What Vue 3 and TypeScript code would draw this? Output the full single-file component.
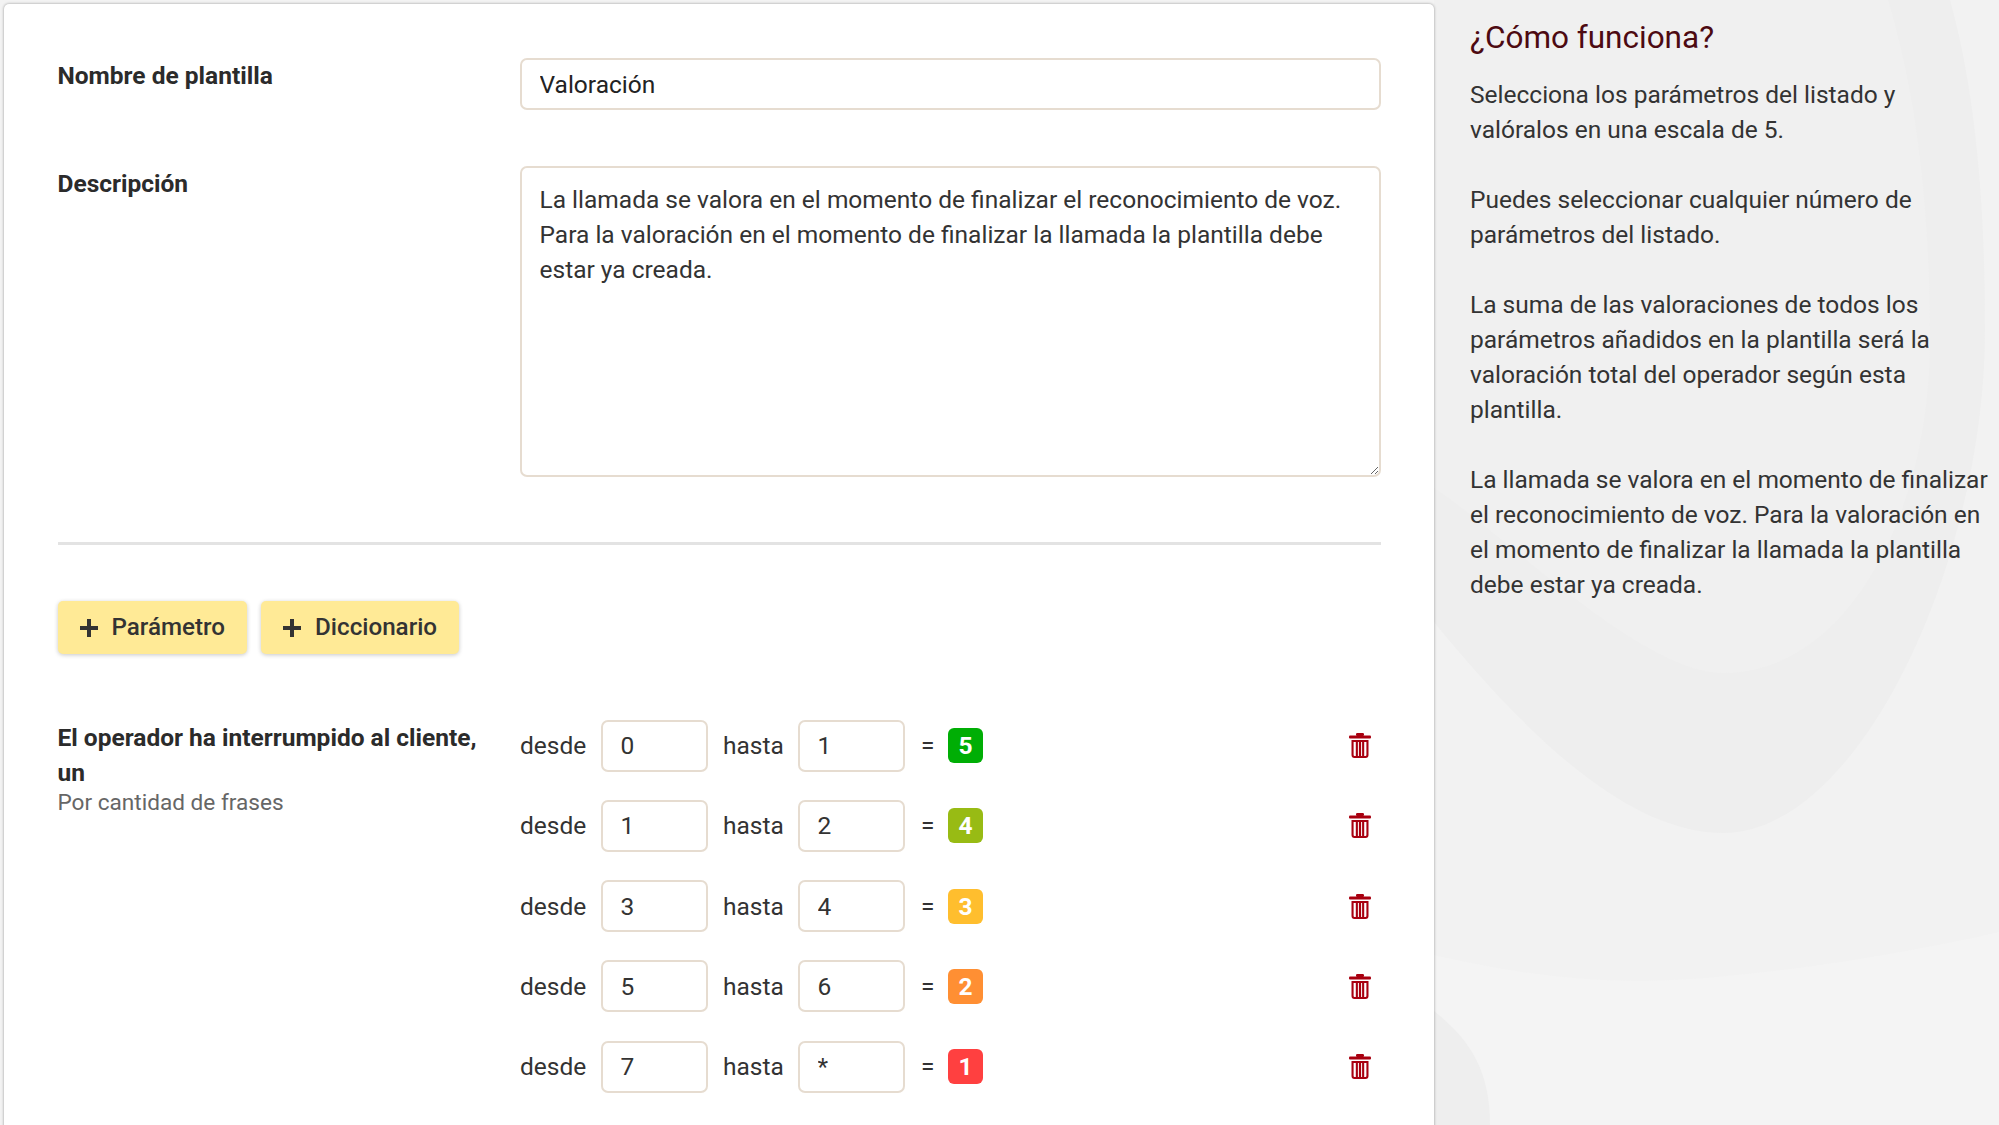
<script setup lang="ts">
interface Range { from: string; to: string; score: number; color: string }
const ranges: Range[] = [
  { from: '0', to: '1', score: 5, color: '#00ae05' },
  { from: '1', to: '2', score: 4, color: '#98bb14' },
  { from: '3', to: '4', score: 3, color: '#ffbe2e' },
  { from: '5', to: '6', score: 2, color: '#ff8f33' },
  { from: '7', to: '*', score: 1, color: '#ff4040' },
]
const description = 'La llamada se valora en el momento de finalizar el reconocimiento de voz. Para la valoración en el momento de finalizar la llamada la plantilla debe estar ya creada.'
const help = [
  'Selecciona los parámetros del listado y valóralos en una escala de 5.',
  'Puedes seleccionar cualquier número de parámetros del listado.',
  'La suma de las valoraciones de todos los parámetros añadidos en la plantilla será la valoración total del operador según esta plantilla.',
  'La llamada se valora en el momento de finalizar el reconocimiento de voz. Para la valoración en el momento de finalizar la llamada la plantilla debe estar ya creada.',
]
</script>

<template>
  <div class="page">
    <svg class="swirl" viewBox="0 0 1999 1125" preserveAspectRatio="none" aria-hidden="true">
      <rect x="1434" y="0" width="565" height="1125" fill="#f4f4f4" />
      <path d="M1434 0H1999V932C1840 968 1700 981 1640 981C1560 981 1490 968 1434 955Z" fill="#f2f2f2" />
      <path d="M1434 622C1530 740 1630 833 1723 833C1860 833 1985 560 1985 330C1985 200 1975 90 1950 0H1434Z" fill="#eeeeee" />
      <path d="M1434 488C1500 530 1640 673 1723 673C1850 673 1930 510 1930 340C1930 200 1915 90 1888 0H1434Z" fill="#f0f0f0" />
      <path d="M1434 1011C1470 1040 1490 1070 1490 1125H1434Z" fill="#eeeeee" />
    </svg>

    <main class="card">
      <div class="field">
        <label class="label">Nombre de plantilla</label>
        <input class="control name" type="text" value="Valoración" />
      </div>
      <div class="field field-desc">
        <label class="label">Descripción</label>
        <textarea class="control desc" :value="description"></textarea>
      </div>
      <hr class="divider" />
      <div class="actions">
        <button class="add" type="button">
          <svg class="plus" viewBox="0 0 18 18" aria-hidden="true"><path d="M7 0h4v7h7v4h-7v7H7v-7H0V7h7z" /></svg>
          Parámetro
        </button>
        <button class="add" type="button">
          <svg class="plus" viewBox="0 0 18 18" aria-hidden="true"><path d="M7 0h4v7h7v4h-7v7H7v-7H0V7h7z" /></svg>
          Diccionario
        </button>
      </div>
      <section class="param">
        <div class="param-head">
          <div class="param-title">El operador ha interrumpido al cliente, un</div>
          <div class="param-sub">Por cantidad de frases</div>
        </div>
        <div class="rows">
          <div v-for="r in ranges" :key="r.score" class="row">
            <span class="word">desde</span>
            <input class="control num" type="text" :value="r.from" />
            <span class="word">hasta</span>
            <input class="control num" type="text" :value="r.to" />
            <span class="eq">=</span>
            <span class="badge" :style="{ background: r.color }">{{ r.score }}</span>
            <svg class="trash" viewBox="0 0 22 25" aria-hidden="true">
              <rect x="7" y="0" width="8" height="3" rx="1.2" />
              <rect x="0" y="2.4" width="22" height="3" rx="1" />
              <path fill-rule="evenodd" d="M2.5 7h17v15a3 3 0 0 1-3 3h-11a3 3 0 0 1-3-3zM4.6 9v13a1 1 0 0 0 1 1h1.2V9zM8.9 9v14h1V9zM12.1 9v14h1V9zM15.2 9v14h1.2a1 1 0 0 0 1-1V9z" />
            </svg>
          </div>
        </div>
      </section>
    </main>

    <aside class="help">
      <h2 class="help-title">¿Cómo funciona?</h2>
      <p v-for="(t, i) in help" :key="i">{{ t }}</p>
    </aside>
  </div>
</template>

<style>
html, body { margin: 0; overflow: hidden; }
</style>

<style scoped>
.page {
  position: relative;
  display: flex;
  height: 1125px;
  overflow: hidden;
  box-sizing: border-box;
  padding: 4px 0 0 4px;
  background: #f3f3f3;
  font-family: Roboto, "Liberation Sans", sans-serif;
  font-size: 24.5px;
  line-height: 35px;
  color: #333;
}
.swirl { position: absolute; inset: 0; width: 100%; height: 100%; }
.card {
  position: relative;
  box-sizing: border-box;
  flex: 0 0 1430px;
  height: 1160px;
  padding: 54px 53px 0 53.5px;
  background: #fff;
  border-radius: 5px 5px 0 0;
  box-shadow: 0 0 3px rgba(0, 0, 0, 0.38);
}
.field { display: grid; grid-template-columns: 462.5px 1fr; }
.field-desc { margin-top: 56px; }
.label { font-weight: 700; color: #2b2b2b; line-height: 36px; }
.control {
  box-sizing: border-box;
  display: block;
  width: 100%;
  border: 2px solid #e6dcd0;
  border-radius: 7px;
  background: #fff;
  padding: 0 17.5px;
  font: inherit;
  color: #333;
  outline: none;
}
.name { height: 52px; color: #222; }
.desc { height: 311px; padding: 14px 17.5px; line-height: 35px; resize: vertical; }
.divider { height: 3px; margin: 65px 0 0; border: 0; background: #e3e3e3; }
.actions { display: flex; gap: 14px; margin-top: 56px; }
.add {
  display: flex;
  align-items: center;
  gap: 14px;
  height: 53px;
  padding: 0 22px;
  border: 0;
  border-radius: 5px;
  background: #ffea96;
  box-shadow: 0 1px 4px rgba(0, 0, 0, 0.22);
  font: inherit;
  font-size: 24.2px;
  font-weight: 500;
  color: #333;
}
.plus { width: 18px; height: 18px; fill: #333; }
.param { display: grid; grid-template-columns: 462.5px 1fr; margin-top: 66px; }
.param-head { padding-right: 30px; }
.param-title { font-weight: 700; color: #2b2b2b; }
.param-sub { color: #666; font-size: 22.6px; line-height: 26px; }
.rows { display: flex; flex-direction: column; gap: 29.3px; }
.row { display: flex; align-items: center; height: 51px; }
.num { flex: none; width: 107px; height: 52px; }
.word { width: 81px; flex: none; }
.num + .word { width: 90px; padding-left: 15px; box-sizing: border-box; }
.eq { width: 43px; flex: none; padding-left: 16px; box-sizing: border-box; }
.badge {
  flex: none;
  width: 35px;
  height: 35px;
  border-radius: 6px;
  color: #fff;
  font-weight: 700;
  text-align: center;
  line-height: 35px;
}
.trash { flex: none; width: 22px; height: 25px; margin-left: auto; margin-right: 10px; fill: #a80010; }
.help { position: relative; box-sizing: border-box; flex: 1; padding: 0 8px 0 36px; }
.help-title { margin: 14px 0 0; font-size: 31.5px; line-height: 40px; font-weight: 400; color: #4d0a12; }
.help p { margin: 0 0 35px; }
.help-title + p { margin-top: 19px; }
</style>
